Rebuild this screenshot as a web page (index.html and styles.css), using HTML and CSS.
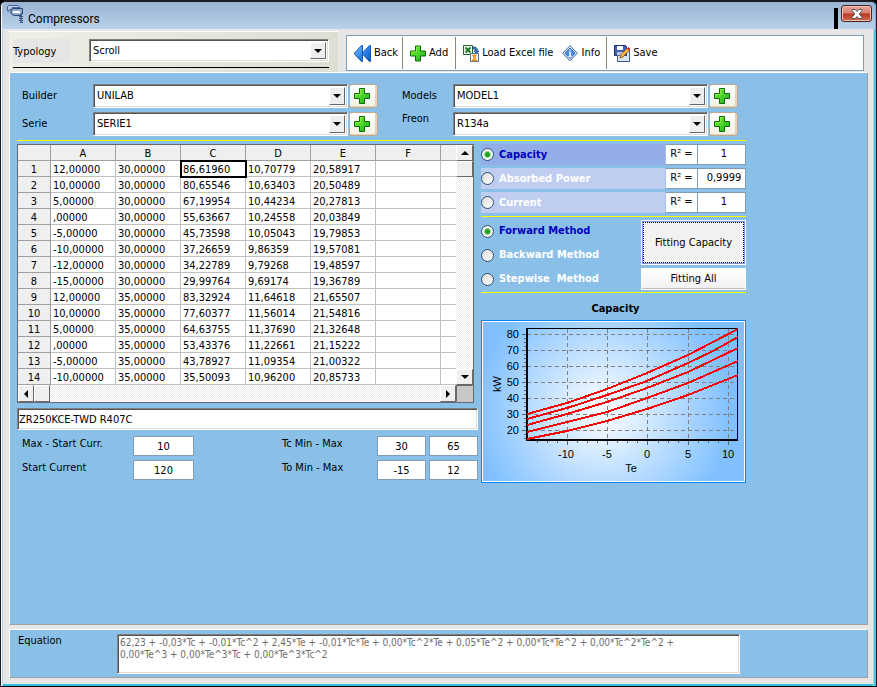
FILE: index.html
```html
<!DOCTYPE html>
<html lang="en">
<head>
<meta charset="utf-8">
<title>Compressors</title>
<link rel="stylesheet" href="styles.css">
</head>
<body>
<svg class="defs" width="0" height="0" aria-hidden="true">
  <linearGradient id="green" x1="0" y1="0" x2="1" y2="1"><stop offset="0" stop-color="#6fe81f"/><stop offset=".5" stop-color="#4bd62a"/><stop offset="1" stop-color="#17a31a"/></linearGradient>
  <linearGradient id="blue" x1="0" y1="0" x2="1" y2="1"><stop offset="0" stop-color="#8cc4fa"/><stop offset=".5" stop-color="#2f86ea"/><stop offset="1" stop-color="#0a50c0"/></linearGradient>
  <symbol id="plus" viewBox="0 0 16 16"><path d="M5.500 .5h5v5h5v5h-5v5h-5v-5h-5v-5h5z" fill="url(#green)" stroke="#0b6b0b"/><path d="M6.500 6.500v-5h3M1.500 9.500v-3h5" fill="none" stroke="#9af25a" stroke-opacity=".7"/></symbol>
</svg>
<div class="window">
  <header class="titlebar">
    <svg class="app-icon" width="17" height="19" viewBox="0 0 17 19" aria-hidden="true"><path d="M.5 6V1.500L2 .5h9l2 2h-8v2H2v2z" fill="#c3d3ea" stroke="#49659b"/><path d="M4 8.500V5l2-1.500h9.500V9H14v1.500H7L4.500 9z" fill="#8ca9d2" stroke="#30466f"/><path d="M6 6h7v2H6z" fill="#fff"/><path d="M14 9v9M12 11.500h4M12 13.500h4M12 15.500h4M13 17.500h3" stroke="#34507f"/></svg>
    <h1>Compressors</h1>
    <span class="mark"></span>
    <button class="close" type="button" aria-label="Close"><svg width="12" height="10" viewBox="0 0 12 10"><path d="M1 .5h3.200L6 2.500 7.800.5H11v1.200L8.200 5 11 8.300v1.200H7.800L6 7.500 4.200 9.500H1V8.300L3.800 5 1 1.700z" fill="#fff" stroke="#50585f"/></svg></button>
  </header>

  <div class="topbar">
    <div class="typology">
      <div class="typology-row">
        <label for="typology">Typology</label>
        <span class="combo"><select id="typology"><option>Scroll</option></select><i></i></span>
      </div>
    </div>
    <nav class="toolbar">
      <div class="group"><button type="button"><svg width="17" height="17" viewBox="0 0 17 17"><path d="M8.500.5v16h-1L.5 9V8l7-7.500zM16.500.5v16h-1L8.500 9V8l7-7.500z" fill="url(#blue)" stroke="#1356b8"/></svg>Back</button></div>
      <div class="group"><button type="button"><svg width="16" height="17"><use href="#plus"/></svg>Add</button></div>
      <div class="group"><button type="button"><svg width="16" height="17" viewBox="0 0 16 17"><path d="M.5.5h9v9h-9z" fill="#eef6ea" stroke="#24682b"/><path d="M2.500 2.500l5 5M7.500 2.500l-5 5" stroke="#1c7a2a" stroke-width="1.800"/><path d="M10 2c3-.5 4.500 1 4.500 4H16l-2.500 3L11 6h1.500C12.500 4.500 11.500 4 10 4z" fill="#3f78cc" stroke="#1a3e7d" stroke-width=".7"/><path d="M7.500 8.500h8v8h-8z" fill="#fff" stroke="#4c6f99"/><path d="M9.500 10h4l-1.500 3 2 3h-5l2-3z" fill="#ffb225" stroke="#c7750c" stroke-width=".7"/></svg>Load Excel file</button><button type="button"><svg width="16" height="17" viewBox="0 0 16 17"><path d="M8 .7l7.300 7.500L8 15.800.7 8.200z" fill="#e6effb" stroke="#43619b"/><path d="M8 3l5 5.200-5 5.300-5-5.300z" fill="#4c8ce6" stroke="#2866c8"/><path d="M8 4.300v1.500M7 7.500h1.200v4M6.500 11.500h3" stroke="#fff" stroke-width="1.400" fill="none"/></svg>Info</button></div>
      <div class="group"><button type="button"><svg width="16" height="17" viewBox="0 0 16 17"><path d="M3.500 4.500h12v12h-12z" fill="#dbe8f7" stroke="#3d5a88"/><path d="M.5.500h11l1 1v9H.5z" fill="#4360b8" stroke="#1d2d6b"/><path d="M3 1h6v4H3z" fill="#f4f7ff"/><path d="M3 7h7v3.500H3z" fill="#b9c8e8"/><path d="M6 13l1-3.500L13.500 3l2 2L9 12z" fill="#fbbb3a" stroke="#7c4b12" stroke-width=".8"/><path d="M13 3.500l1.500-1.500 2 2L15 5.500z" fill="#d3262e"/></svg>Save</button></div>
    </nav>
  </div>

  <main class="panel main">
    <div class="content">
      <div class="filters">
        <label for="builder">Builder</label>
        <span class="combo"><select id="builder"><option>UNILAB</option></select><i></i></span>
        <button class="plus" type="button" aria-label="Add builder"><svg width="16" height="16"><use href="#plus"/></svg></button>
        <label class="second" for="models">Models</label>
        <span class="combo"><select id="models"><option>MODEL1</option></select><i></i></span>
        <button class="plus" type="button" aria-label="Add model"><svg width="16" height="16"><use href="#plus"/></svg></button>
        <label for="serie">Serie</label>
        <span class="combo"><select id="serie"><option>SERIE1</option></select><i></i></span>
        <button class="plus" type="button" aria-label="Add serie"><svg width="16" height="16"><use href="#plus"/></svg></button>
        <label class="second raised" for="freon">Freon</label>
        <span class="combo"><select id="freon"><option>R134a</option></select><i></i></span>
        <button class="plus" type="button" aria-label="Add freon"><svg width="16" height="16"><use href="#plus"/></svg></button>
      </div>
      <hr>
      <div class="columns">
        <section class="left">
          <div class="sheet">
            <table>
              <colgroup><col class="num"><col><col><col><col><col><col><col class="rest"></colgroup>
              <thead><tr><th></th><th>A</th><th>B</th><th>C</th><th>D</th><th>E</th><th>F</th><th></th></tr></thead>
              <tbody>
                <tr><th>1</th><td>12,00000</td><td>30,00000</td><td class="current">86,61960</td><td>10,70779</td><td>20,58917</td><td></td><td></td></tr>
                <tr><th>2</th><td>10,00000</td><td>30,00000</td><td>80,65546</td><td>10,63403</td><td>20,50489</td><td></td><td></td></tr>
                <tr><th>3</th><td>5,00000</td><td>30,00000</td><td>67,19954</td><td>10,44234</td><td>20,27813</td><td></td><td></td></tr>
                <tr><th>4</th><td>,00000</td><td>30,00000</td><td>55,63667</td><td>10,24558</td><td>20,03849</td><td></td><td></td></tr>
                <tr><th>5</th><td>-5,00000</td><td>30,00000</td><td>45,73598</td><td>10,05043</td><td>19,79853</td><td></td><td></td></tr>
                <tr><th>6</th><td>-10,00000</td><td>30,00000</td><td>37,26659</td><td>9,86359</td><td>19,57081</td><td></td><td></td></tr>
                <tr><th>7</th><td>-12,00000</td><td>30,00000</td><td>34,22789</td><td>9,79268</td><td>19,48597</td><td></td><td></td></tr>
                <tr><th>8</th><td>-15,00000</td><td>30,00000</td><td>29,99764</td><td>9,69174</td><td>19,36789</td><td></td><td></td></tr>
                <tr><th>9</th><td>12,00000</td><td>35,00000</td><td>83,32924</td><td>11,64618</td><td>21,65507</td><td></td><td></td></tr>
                <tr><th>10</th><td>10,00000</td><td>35,00000</td><td>77,60377</td><td>11,56014</td><td>21,54816</td><td></td><td></td></tr>
                <tr><th>11</th><td>5,00000</td><td>35,00000</td><td>64,63755</td><td>11,37690</td><td>21,32648</td><td></td><td></td></tr>
                <tr><th>12</th><td>,00000</td><td>35,00000</td><td>53,43376</td><td>11,22661</td><td>21,15222</td><td></td><td></td></tr>
                <tr><th>13</th><td>-5,00000</td><td>35,00000</td><td>43,78927</td><td>11,09354</td><td>21,00322</td><td></td><td></td></tr>
                <tr><th>14</th><td>-10,00000</td><td>35,00000</td><td>35,50093</td><td>10,96200</td><td>20,85733</td><td></td><td></td></tr>
              </tbody>
            </table>
            <div class="scroll vertical"><button type="button" aria-label="Scroll up"><b class="up"></b></button><span class="thumb"></span><button type="button" aria-label="Scroll down"><b class="down"></b></button></div>
            <div class="scroll horizontal"><button type="button" aria-label="Scroll left"><b class="to-left"></b></button><span class="thumb"></span><button type="button" aria-label="Scroll right"><b class="to-right"></b></button></div>
            <span class="corner"></span>
          </div>
          <input class="model" type="text" value="ZR250KCE-TWD R407C" aria-label="Model name">
          <div class="limits">
            <label for="max">Max - Start Curr.</label><input id="max" value="10">
            <label class="range" for="tcmin">Tc Min - Max</label><input id="tcmin" value="30"><input class="upper" value="65" aria-label="Tc maximum">
            <label for="start">Start Current</label><input id="start" value="120">
            <label class="range" for="tomin">To Min - Max</label><input id="tomin" value="-15"><input class="upper" value="12" aria-label="To maximum">
          </div>
        </section>
        <section class="right">
          <div class="quantities">
            <div class="quantity"><label class="choice on"><input type="radio" name="quantity" checked>Capacity</label><span>R² =</span><output>1</output></div>
            <div class="quantity"><label class="choice"><input type="radio" name="quantity">Absorbed Power</label><span>R² =</span><output>0,9999</output></div>
            <div class="quantity"><label class="choice"><input type="radio" name="quantity">Current</label><span>R² =</span><output>1</output></div>
          </div>
          <hr>
          <div class="methods">
            <div class="method-list">
              <label class="choice on"><input type="radio" name="method" checked>Forward Method</label>
              <label class="choice"><input type="radio" name="method">Backward Method</label>
              <label class="choice"><input type="radio" name="method">Stepwise&nbsp; Method</label>
            </div>
            <div class="fits">
              <button class="fit focused" type="button">Fitting Capacity</button>
              <button class="fit" type="button">Fitting All</button>
            </div>
          </div>
          <hr>
          <h2>Capacity</h2>
          <svg class="chart" viewBox="1 1 263 161" role="img" aria-label="Capacity in kW against Te">
            <defs><radialGradient id="glow" gradientUnits="userSpaceOnUse" cx="122" cy="91" r="128"><stop offset="0" stop-color="#fff"/><stop offset="1" stop-color="#80c0ff"/></radialGradient></defs>
            <rect x="1" y="1" width="263" height="161" fill="#fff"/>
            <rect x="2" y="2" width="261" height="159" fill="url(#glow)"/>
            <path class="gridline" d="M86.500 9v111M126.500 9v111M166.500 9v111M207.500 9v111M247.500 9v111M46 14.500h210M46 30.500h210M46 46.500h210M46 62.500h210M46 78.500h210M46 94.500h210M46 110.500h210"/>
            <path class="ticks" d="M86.500 121v4M126.500 121v4M166.500 121v4M207.500 121v4M247.500 121v4M56.500 121v2M66.500 121v2M76.500 121v2M96.500 121v2M106.500 121v2M116.500 121v2M136.500 121v2M146.500 121v2M156.500 121v2M177.500 121v2M187.500 121v2M197.500 121v2M217.500 121v2M227.500 121v2M237.500 121v2M41 14.500h4M41 30.500h4M41 46.500h4M41 62.500h4M41 78.500h4M41 94.500h4M41 110.500h4M43 18.500h2M43 22.500h2M43 26.500h2M43 34.500h2M43 38.500h2M43 42.500h2M43 50.500h2M43 54.500h2M43 58.500h2M43 66.500h2M43 70.500h2M43 74.500h2M43 82.500h2M43 86.500h2M43 90.500h2M43 98.500h2M43 102.500h2M43 106.500h2M43 114.500h2M43 118.500h2"/>
            <path class="frame" d="M45 8.500h211.500V120"/>
            <path class="axis" d="M45.500 8v112H257"/>
            <g class="curves">
              <polyline points="46,94 86,83 126,69 166,53 207,35 232,22 257,9"/>
              <polyline points="46,99 86,88 126,75 166,61 207,43 232,31 257,17"/>
              <polyline points="46,105 86,94 126,82 166,68 207,52 232,40 257,28"/>
              <polyline points="46,112 86,102 126,92 166,78 207,63 232,52 257,41"/>
              <polyline points="46,119 86,111 126,101 166,89 207,75 232,65 257,55"/>
            </g>
            <g class="y-labels"><text x="38" y="18">80</text><text x="38" y="34">70</text><text x="38" y="50">60</text><text x="38" y="66">50</text><text x="38" y="82">40</text><text x="38" y="98">30</text><text x="38" y="114">20</text></g>
            <g class="x-labels"><text x="85" y="138">-10</text><text x="126" y="138">-5</text><text x="166" y="138">0</text><text x="207" y="138">5</text><text x="247" y="138">10</text><text x="150" y="152">Te</text><text transform="translate(20 64) rotate(-90)">kW</text></g>
          </svg>
        </section>
      </div>
    </div>
  </main>

  <footer class="panel equation">
    <label for="equation">Equation</label>
    <textarea id="equation">62,23 + -0,03*Tc + -0,01*Tc^2 + 2,45*Te + -0,01*Tc*Te + 0,00*Tc^2*Te + 0,05*Te^2 + 0,00*Tc*Te^2 + 0,00*Tc^2*Te^2 +
0,00*Te^3 + 0,00*Te^3*Tc + 0,00*Te^3*Tc^2</textarea>
  </footer>
</div>
</body>
</html>
```
FILE: styles.css
```css
* { box-sizing: border-box; }
body { margin: 0; background: #000; color: #000; font: 11px/14px "DejaVu Sans Condensed", "DejaVu Sans", sans-serif; }
button, input, select, textarea { font: inherit; color: inherit; margin: 0; padding: 0; border: 0; border-radius: 0; }
button { cursor: pointer; }
.defs { position: absolute; }

.window { min-height: 100vh; display: flex; flex-direction: column; background: #e6e6e6; border: 1px solid #1c1c24; border-top-width: 2px; border-bottom: 1px solid #000; border-radius: 6px 6px 0 0; padding: 0 8px 8px; box-shadow: inset 1px 0 #fff, inset 2px 0 #b4cfeb, inset -2px 0 #4cc3e0, inset -3px 0 #b8d2ec, inset 0 -2px #35c0dc; }

.titlebar { height: 27px; margin: 0 -7px; padding: 0 3px 0 5px; display: flex; align-items: flex-start; background: linear-gradient(#99b4d1, #b9d1ea); border-radius: 5px 5px 0 0; }
.app-icon { margin-top: 3px; }
h1 { margin: 8px auto 0 4px; font: 12px/18px Roboto, sans-serif; }
.mark { width: 4px; height: 21px; margin: 6px 3px 0 0; background: #000; }
.close { width: 31px; height: 17px; margin-top: 3px; display: grid; place-items: center; border: 1px solid #4b2421; border-radius: 3px; background: linear-gradient(#e8a79c, #d6806f 48%, #b8371f 52%, #cf6a4f); box-shadow: inset 0 0 0 1px #eec0b6; }

.topbar { display: flex; gap: 8px; height: 43px; padding-top: 2px; }
.typology { flex: 0 1 329px; border-top: 1px solid #fff; padding: 7px 9px 0 4px; background: linear-gradient(90deg, #efefe8, #dedfd3); }
.typology-row { display: flex; justify-content: space-between; height: 29px; border-bottom: 1px solid #000; }
.typology label { width: 58px; height: 24px; line-height: 25px; background: #e6e6e6; }
.typology .combo { width: 240px; height: 23px; }

.combo { display: flex; min-width: 0; background: #fff; border: 1px solid; border-color: #808080 #fff #fff #808080; box-shadow: inset 1px 1px #555, inset -1px -1px #dcdcdc; padding: 2px; }
.combo select { flex: 1; min-width: 0; appearance: none; background: none; padding-left: 1px; }
.combo i { width: 16px; border: 1px solid; border-color: #fff #686868 #686868 #fff; background: #eee; display: grid; place-items: center; }
.combo i::after, .scroll b { content: ""; border: 4px solid transparent; border-top-color: #000; border-bottom: 0; }

.toolbar { flex: 1; margin: 4px 4px 1px 0; padding: 1px; display: flex; background: #fff; border: 1px solid #7f9db9; }
.group { display: flex; gap: 9px; padding: 0 7px; border-left: 1px solid #8c8775; }
.group:first-child { border-left: 0; padding: 0 4px 0 6px; }
.group:nth-child(3) { padding-right: 6px; }
.group button { display: flex; align-items: center; gap: 3px; background: none; white-space: nowrap; }

.panel { background: #8ac0e8; border: 1px solid; border-color: #fff #a0a0a0 #a0a0a0 #fff; }
.main { flex: 1; padding: 11px 7px; }
.content { max-width: 729px; }
hr { height: 1px; margin: 0; border: 0; background: #ffff00; }

.filters { display: grid; grid-template-columns: 71px 1fr 30px 75px 1fr 30px; row-gap: 4px; padding: 0 8px 4px 5px; align-items: center; }
.filters .combo, .plus { height: 24px; }
.second { padding-left: 24px; }
.raised { align-self: start; }
.plus { margin-left: 1px; display: grid; place-items: center; background: linear-gradient(#fff, #f3efe2); border: 1px solid #c0a98c; border-radius: 3px; box-shadow: inset -2px -1px #dcd5c2; }
.plus svg { margin-right: 4px; }

.columns { display: grid; grid-template-columns: minmax(0, 464px) minmax(0, 265px); padding-top: 3px; align-items: start; }
.left { padding-right: 3px; }
.sheet { width: 457px; max-width: 100%; display: grid; grid-template-columns: 1fr 17px; grid-template-rows: auto 17px; border: 1px solid #696969; background: #fff; overflow: hidden; }
table { width: 100%; table-layout: fixed; border-collapse: separate; border-spacing: 0; }
col { width: 65px; }
col.num { width: 33px; }
col.rest { width: auto; }
th, td { height: 16px; padding: 2px 0 0 2px; border: 0 solid #c0c0c0; border-width: 0 1px 1px 0; line-height: 13px; text-align: left; white-space: nowrap; }
th { padding-left: 0; background: #efefef; border-color: #a0a0a0; font-weight: normal; text-align: center; }
tr > :last-child { border-right: 0; }
.current { outline: 2px solid #000; outline-offset: -1px; }

.scroll { display: flex; background: repeating-conic-gradient(#fff 0 25%, #ececec 0 50%) 0 0 / 2px 2px; }
.vertical { flex-direction: column; }
.scroll button, .thumb { width: 16px; height: 17px; flex: none; display: grid; place-items: center; background: #efefef; border: 1px solid; border-color: #fff #696969 #696969 #fff; }
.vertical button, .vertical .thumb { width: 17px; height: 16px; }
.scroll button:last-child { margin-left: auto; }
.vertical button:last-child { margin: auto 0 0; }
.up { transform: rotate(180deg); }
.to-left { transform: rotate(90deg); }
.to-right { transform: rotate(-90deg); }
.corner { background: #c8c8c8; border: 1px solid; border-color: #696969 #c8c8c8 #c8c8c8 #696969; }

.model { display: block; width: 100%; height: 22px; margin-top: 5px; padding: 0 1px; background: #fff; border: 1px solid; border-color: #808080 #fff #fff #808080; box-shadow: inset 1px 1px #555, inset -1px -1px #dcdcdc; }
.limits { display: grid; grid-template-columns: 111px 61px 1fr 49px 52px; row-gap: 4px; padding: 6px 0 0 5px; line-height: 16px; }
.limits input { min-width: 0; height: 20px; text-align: center; background: #fff; border: 1px solid #7f9db9; }
.limits .upper { margin-left: 3px; }
.range { padding-left: 88px; }

.quantities { display: grid; gap: 3px; padding-bottom: 3px; }
.quantity { display: grid; grid-template-columns: minmax(0, 1fr) 32px 49px; height: 21px; background: #bfcdf0; }
.quantity:first-child { background: #93aee6; }
.quantity span, .quantity output { background: #fff; border: 1px solid #7f9db9; text-align: center; line-height: 17px; }
.quantity output { padding-left: 5px; white-space: nowrap; }
.quantity span { border-left-color: #a9c1d8; border-right: 0; }
.choice { display: flex; align-items: center; gap: 5px; font: bold 11px/20px "DejaVu Sans Condensed", "DejaVu Sans", sans-serif; color: #fff; white-space: nowrap; }
.choice.on { color: #0000c0; }
.choice input { appearance: none; flex: none; width: 13px; height: 13px; border: 1px solid #2c5274; border-radius: 50%; background: linear-gradient(135deg, #dcdcd6, #fff); }
.choice input:checked { background: radial-gradient(circle, #21a121 0 2px, #9bdc9b 3px, #f6f6f2 4px); }

.methods { display: flex; justify-content: space-between; padding: 3px 0 2px; }
.method-list { display: grid; gap: 4px; align-content: center; }
.fits { width: 105px; display: flex; flex-direction: column; gap: 3px; }
.fit { height: 22px; background: linear-gradient(#fff, #f0f0f0); border: 1px solid #fff; box-shadow: inset 0 -1px #bcbcbc; }
.focused { height: 45px; background: #f2f2f2; outline: 1px dotted #000; outline-offset: -3px; box-shadow: inset 0 0 0 1px #7f93e0; }
h2 { margin: 9px 0 4px; font: bold 11px/14px "DejaVu Sans Condensed", "DejaVu Sans", sans-serif; text-align: center; padding-left: 4px; }
.chart { display: block; width: 100%; border: 1px solid #0a84f5; font: 11px "Liberation Sans", sans-serif; }
.chart path { fill: none; shape-rendering: crispEdges; }
.gridline { stroke: #808080; stroke-dasharray: 4 3; }
.ticks { stroke: #606060; }
.frame { stroke: #000; }
.axis { stroke: #000; stroke-width: 2; }
.curves { fill: none; stroke: #f00; stroke-width: 2; shape-rendering: crispEdges; }
.y-labels { text-anchor: end; }
.x-labels { text-anchor: middle; }

.equation { margin-top: 4px; height: 49px; padding: 4px 8px; display: flex; }
.equation label { width: 99px; }
.equation textarea { flex: 0 1 623px; min-width: 0; height: 40px; resize: none; overflow: hidden; padding: 2px; line-height: 12px; font-size: 10px; color: #6d6d6d; background: #fff; border: 1px solid; border-color: #808080 #fff #fff #808080; box-shadow: inset 1px 1px #555, inset -1px -1px #dcdcdc; }
```
